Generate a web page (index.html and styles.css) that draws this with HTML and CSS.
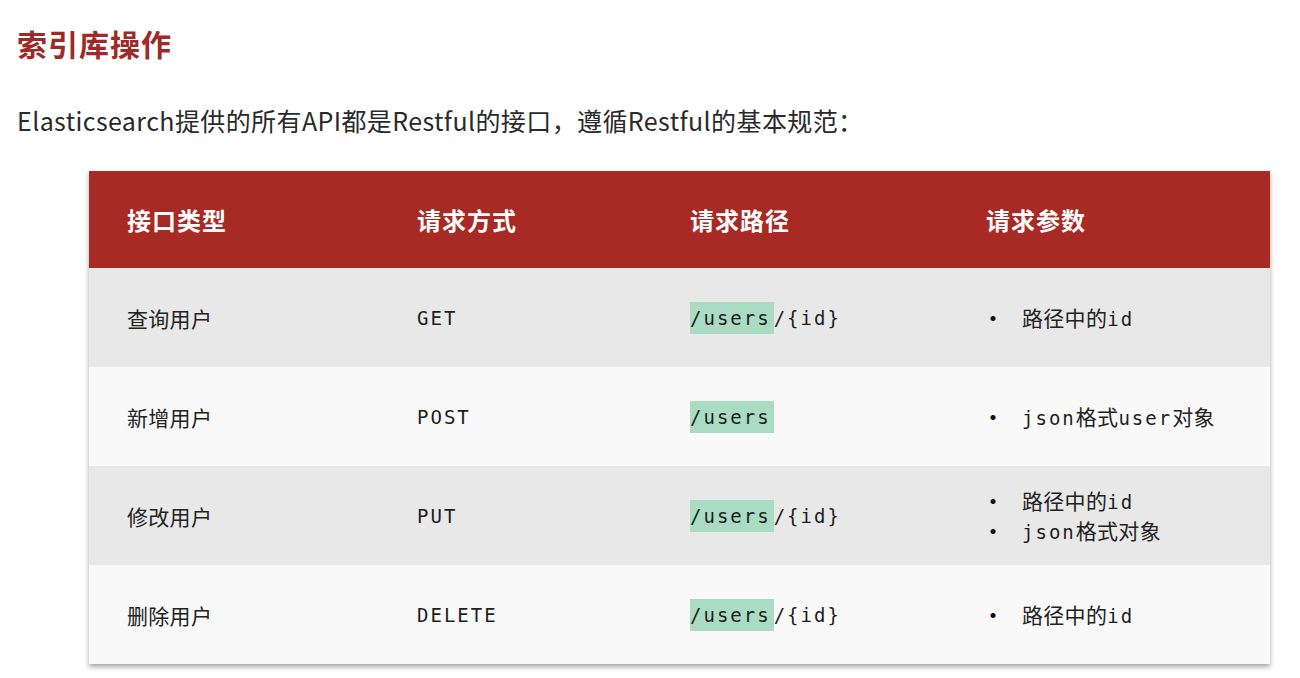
FILE: index.html
```html
<!DOCTYPE html>
<html lang="zh-CN">
<head>
<meta charset="utf-8">
<title>索引库操作</title>
<link rel="stylesheet" href="styles.css">
</head>
<body>
<div class="page">
  <h1 class="title">索引库操作</h1>
  <p class="intro">Elasticsearch提供的所有API都是Restful的接口，遵循Restful的基本规范：</p>
  <div class="table">
    <div class="row head">
      <div class="cell">接口类型</div>
      <div class="cell">请求方式</div>
      <div class="cell">请求路径</div>
      <div class="cell">请求参数</div>
    </div>
    <div class="row odd">
      <div class="cell">查询用户</div>
      <div class="cell mono">GET</div>
      <div class="cell mono"><span class="hl">/users</span>/{id}</div>
      <div class="cell"><ul class="params"><li>路径中的<span class="mono">id</span></li></ul></div>
    </div>
    <div class="row even">
      <div class="cell">新增用户</div>
      <div class="cell mono">POST</div>
      <div class="cell mono"><span class="hl">/users</span></div>
      <div class="cell"><ul class="params"><li><span class="mono">json</span>格式<span class="mono">user</span>对象</li></ul></div>
    </div>
    <div class="row odd">
      <div class="cell">修改用户</div>
      <div class="cell mono">PUT</div>
      <div class="cell mono"><span class="hl">/users</span>/{id}</div>
      <div class="cell"><ul class="params"><li>路径中的<span class="mono">id</span></li><li><span class="mono">json</span>格式对象</li></ul></div>
    </div>
    <div class="row even">
      <div class="cell">删除用户</div>
      <div class="cell mono">DELETE</div>
      <div class="cell mono"><span class="hl">/users</span>/{id}</div>
      <div class="cell"><ul class="params"><li>路径中的<span class="mono">id</span></li></ul></div>
    </div>
  </div>
</div>
</body>
</html>
```
FILE: styles.css
```css
html, body {
  margin: 0;
  padding: 0;
  background: #ffffff;
}
body {
  font-family: "Noto Sans CJK SC", "Noto Sans", sans-serif;
  color: #222;
}
.page {
  width: 1300px;
  height: 678px;
  padding: 0 0 0 17px;
  box-sizing: border-box;
  overflow: hidden;
}
.title {
  margin: 0;
  padding-top: 22px;
  font-size: 30px;
  line-height: 42px;
  font-weight: 700;
  color: #9e2b27;
  letter-spacing: 1px;
}
.intro {
  margin: 0;
  padding-top: 40px;
  font-size: 25px;
  line-height: 32px;
  color: #2a2a2a;
  letter-spacing: 0.4px;
}
.table {
  margin: 35px 0 0 72px;
  width: 1181px;
  box-shadow: 0 3px 5px rgba(0,0,0,0.35);
}
.row {
  display: grid;
  grid-template-columns: 290px 273px 296px 1fr;
  align-items: center;
  height: 99px;
}
.row.head {
  height: 97px;
  background: #a72a25;
  color: #ffffff;
  font-weight: 700;
}
.row.odd { background: #e8e8e8; }
.row.even { background: #f9f9f9; }
.cell {
  padding-left: 38px;
  font-size: 21px;
  line-height: 28px;
  letter-spacing: 0.3px;
}
.row.head .cell {
  font-size: 24px;
  letter-spacing: 1px;
}
.mono {
  font-family: "DejaVu Sans Mono", "Liberation Mono", monospace;
  font-size: 19px;
  letter-spacing: 2px;
  color: #1e1e1e;
}
.hl {
  background: #a9dcc2;
  padding: 5px 3px 5px 0;
  letter-spacing: 2px;
}
.params {
  list-style: none;
  margin: 0;
  padding: 0;
}
.params li {
  position: relative;
  padding-left: 36px;
  line-height: 28px;
}
.params li::before {
  content: "•";
  position: absolute;
  left: -5px;
  top: 0;
  font-size: 24px;
  color: #111;
}
```
